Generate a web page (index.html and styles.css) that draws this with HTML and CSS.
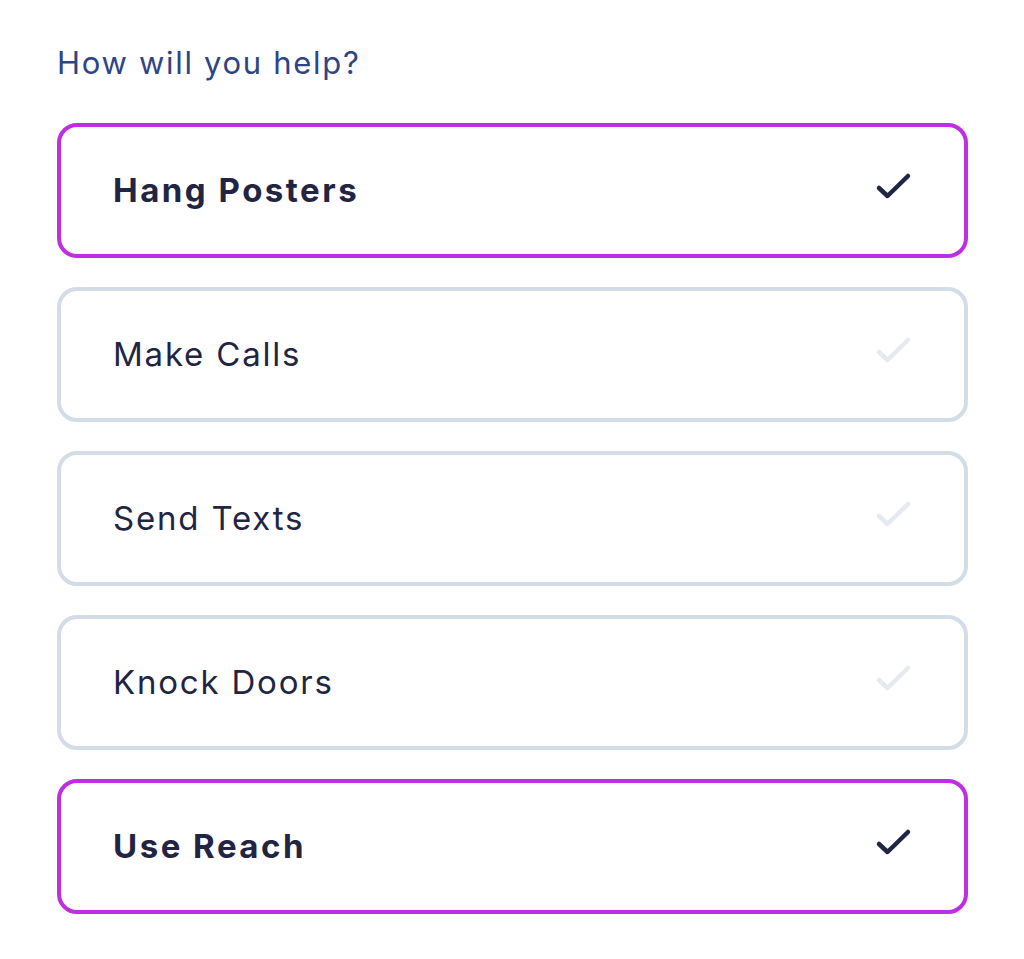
FILE: index.html
```html
<!DOCTYPE html>
<html lang="en">
<head>
<meta charset="utf-8">
<title>How will you help?</title>
<link rel="stylesheet" href="styles.css">
</head>
<body>
<main class="page">
  <h1 class="question">How will you help?</h1>
  <ul class="options">
    <li class="option is-selected">
      <span class="option-label">Hang Posters</span>
      <svg class="check" viewBox="0 0 40 32" aria-hidden="true"><path d="M5 16 L13.5 24 L34 4"/></svg>
    </li>
    <li class="option">
      <span class="option-label">Make Calls</span>
      <svg class="check" viewBox="0 0 40 32" aria-hidden="true"><path d="M5 16 L13.5 24 L34 4"/></svg>
    </li>
    <li class="option">
      <span class="option-label">Send Texts</span>
      <svg class="check" viewBox="0 0 40 32" aria-hidden="true"><path d="M5 16 L13.5 24 L34 4"/></svg>
    </li>
    <li class="option">
      <span class="option-label">Knock Doors</span>
      <svg class="check" viewBox="0 0 40 32" aria-hidden="true"><path d="M5 16 L13.5 24 L34 4"/></svg>
    </li>
    <li class="option is-selected">
      <span class="option-label">Use Reach</span>
      <svg class="check" viewBox="0 0 40 32" aria-hidden="true"><path d="M5 16 L13.5 24 L34 4"/></svg>
    </li>
  </ul>
</main>
</body>
</html>
```

FILE: styles.css
```css
html, body {
  margin: 0;
  padding: 0;
  background: #ffffff;
}

body {
  font-family: "Inter", "Noto Sans", sans-serif;
  color: #1f2542;
}

.page {
  padding: 44px 56px 0 57px;
}

.question {
  margin: 0;
  font-size: 31px;
  font-weight: 400;
  line-height: 38px;
  letter-spacing: 1.7px;
  color: #2e4585;
}

.options {
  list-style: none;
  margin: 41px 0 0 0;
  padding: 0;
  display: flex;
  flex-direction: column;
  gap: 29.5px;
}

.option {
  box-sizing: border-box;
  height: 134.5px;
  border: 4px solid #d3dce7;
  border-radius: 20px;
  padding: 0 50px 0 52px;
  display: flex;
  align-items: center;
  justify-content: space-between;
}

.option.is-selected {
  border-color: #bf2ee0;
}

.option-label {
  font-size: 33px;
  font-weight: 400;
  letter-spacing: 1.8px;
  color: #1f2542;
}

.is-selected .option-label {
  font-weight: 700;
  letter-spacing: 2.5px;
}

.check {
  width: 40px;
  height: 32px;
  margin-bottom: 4px;
  fill: none;
  stroke: #e6eaf0;
  stroke-width: 4.5;
  stroke-linecap: round;
  stroke-linejoin: round;
}

.is-selected .check {
  stroke: #1f2542;
}
```
